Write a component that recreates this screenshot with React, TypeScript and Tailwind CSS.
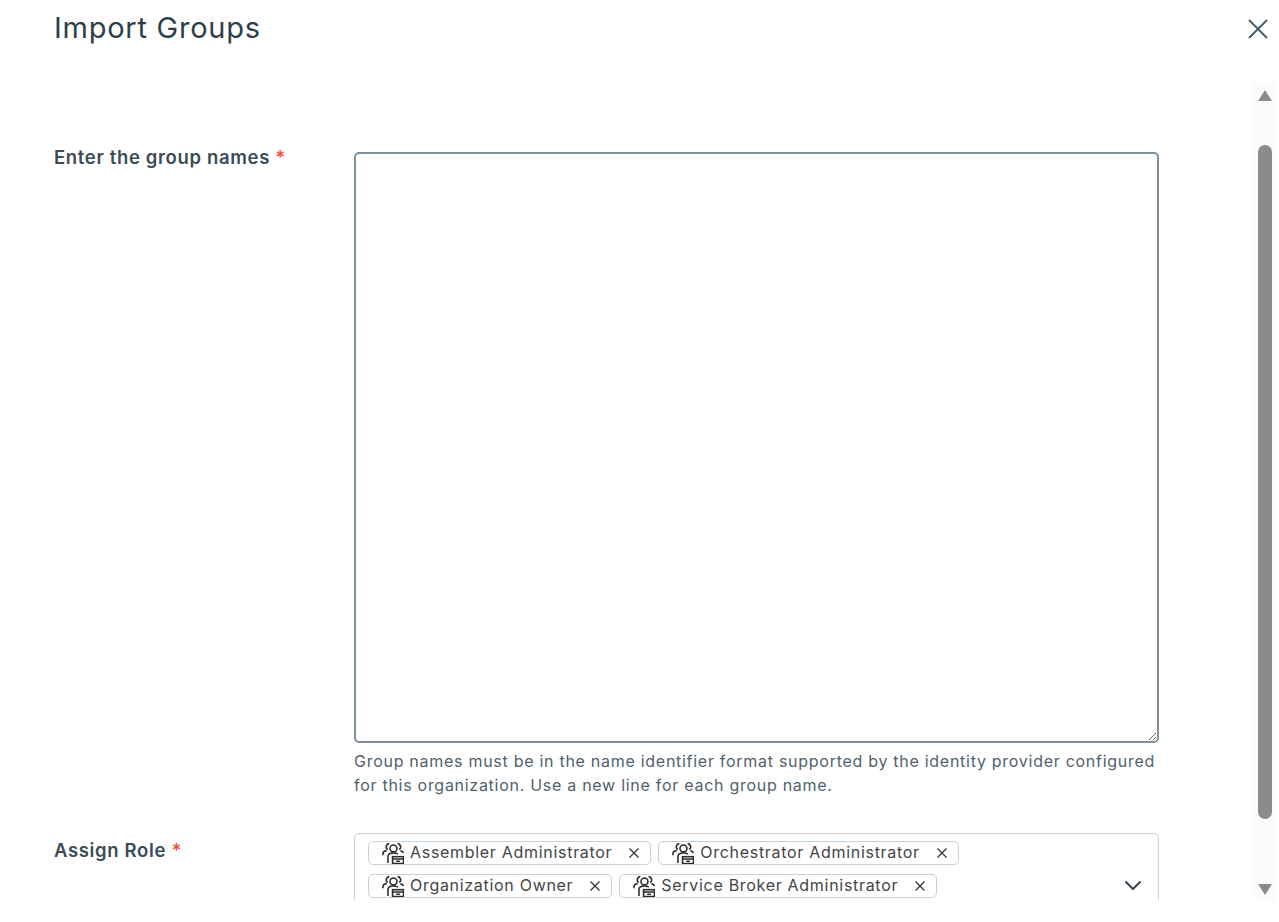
import React from "react";

function GroupIcon() {
  return (
    <svg width="22" height="22" viewBox="0 0 24 24" fill="none" stroke="#2b2b2b" strokeWidth="1.700" className="shrink-0">
      <circle cx="12.500" cy="7" r="3.800" />
      <path d="M6.500 23v-7.200c0-2.400 2.400-3.800 6-3.800 2 0 3.700.4 4.800 1.200" />
      <path d="M8 1.800a3.500 3.500 0 0 0-1.800 6.400M1 14.500v-1.500c0-2 1.600-3.400 4.200-3.600" />
      <path d="M17 1.800a3.500 3.500 0 0 1 1.800 6.400M20 9.500c1.600.3 3 1.200 3.500 2.500" />
      <rect x="11.500" y="16" width="12" height="7.500" />
      <path d="M11.500 18.500h12M15.500 21h4" />
    </svg>
  );
}

function Chip({ label }: { label: string }) {
  return (
    <div className="flex h-[24px] items-center rounded-[5px] border border-[#c5d2da] pl-[13px] text-[16px] tracking-[0.7px] text-[#454545]">
      <GroupIcon />
      <span className="ml-[6px] whitespace-nowrap pb-[2px]">{label}</span>
      <svg width="12" height="12" viewBox="0 0 12 12" stroke="#313131" strokeWidth="1.200" className="mb-[1px] ml-[16px] mr-[10px]">
        <path d="M1.500 1.500l9 9M10.500 1.500l-9 9" />
      </svg>
    </div>
  );
}

export default function App() {
  return (
    <div className="flex h-[922px] w-[1279px] flex-col overflow-hidden bg-white font-['Inter','Liberation_Sans',sans-serif] text-[#2f3f48]">
      <header className="flex h-[83px] shrink-0 items-start justify-between pl-[54px] pr-[10px] pt-[9px]">
        <h1 className="text-[29px] leading-[37px] font-normal tracking-[0.75px] text-[#2c3f4a]">Import Groups</h1>
        <button className="mt-[9px]" aria-label="Close">
          <svg width="22" height="22" viewBox="0 0 22 22" stroke="#3f5a68" strokeWidth="1.800">
            <path d="M2 2l18 18M20 2L2 20" />
          </svg>
        </button>
      </header>

      <div className="flex h-[817px] shrink-0">
        <div className="min-w-0 flex-1 overflow-hidden pl-[54px] pt-[69px]">
          <div className="flex">
            <label className="w-[300px] shrink-0 text-[18.500px] leading-[11px] font-semibold tracking-[0.65px] text-[#3a4c56]">
              Enter the group names <span className="text-[#e8523f]">*</span>
            </label>
            <div className="w-[805px] shrink-0">
              <textarea className="block h-[591px] w-[805px] rounded-[5px] border-2 border-[#7f919b] bg-white outline-none" />
              <p className="mt-[6px] text-[16px] leading-[24px] tracking-[0.72px] text-[#51626c]">
                Group names must be in the name identifier format supported by the identity provider configured for this organization. Use a new line for each group name.
              </p>
            </div>
          </div>
          <div className="mt-[36px] flex">
            <label className="w-[300px] shrink-0 pt-[6px] text-[18.500px] leading-[22px] font-semibold tracking-[0.65px] text-[#3a4c56]">
              Assign Role <span className="text-[#e8523f]">*</span>
            </label>
            <div className="relative h-[90px] w-[805px] shrink-0 rounded-[5px] border border-[#c5d2da] pl-[13px] pt-[7px]">
              <div className="flex gap-[7px]">
                <Chip label="Assembler Administrator" />
                <Chip label="Orchestrator Administrator" />
              </div>
              <div className="mt-[9px] flex gap-[7px]">
                <Chip label="Organization Owner" />
                <Chip label="Service Broker Administrator" />
              </div>
              <svg width="18" height="11" viewBox="0 0 18 11" fill="none" stroke="#33484f" strokeWidth="2" className="absolute right-[16px] top-[46px]">
                <path d="M1.500 1.500L9 9l7.500-7.500" />
              </svg>
            </div>
          </div>
        </div>

        <div className="mr-[3px] flex w-[23px] shrink-0 flex-col items-center bg-[#fbfbfb]">
          <svg width="14" height="11" viewBox="0 0 14 11" fill="#8b8b8b" className="mt-[7px]"><path d="M7 0l7 11H0z" /></svg>
          <div className="mt-[44px] h-[674px] w-[14px] rounded-full bg-[#8b8b8b]" />
          <div className="flex-1" />
          <svg width="14" height="11" viewBox="0 0 14 11" fill="#8b8b8b" className="mb-[5px]"><path d="M7 11L14 0H0z" /></svg>
        </div>
      </div>
    </div>
  );
}
